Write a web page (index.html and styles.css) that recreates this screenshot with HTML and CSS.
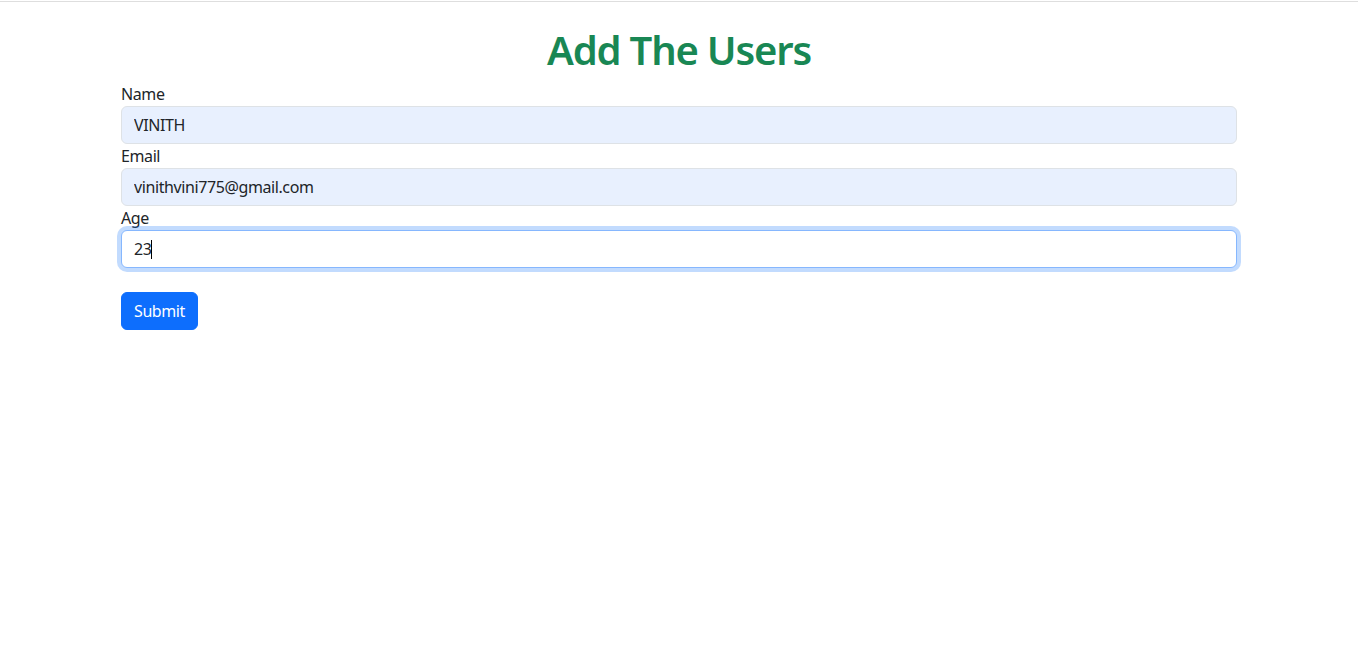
FILE: index.html
```html
<!DOCTYPE html>
<html lang="en">
<head>
<meta charset="utf-8">
<title>Add The Users</title>
<link rel="stylesheet" href="styles.css">
</head>
<body>
<div class="topline"></div>
<main class="container">
  <h1 class="title">Add The Users</h1>
  <form class="form">
    <div class="field">
      <label class="label" for="name">Name</label>
      <input class="control autofill" id="name" type="text" value="VINITH">
    </div>
    <div class="field">
      <label class="label" for="email">Email</label>
      <input class="control autofill" id="email" type="email" value="vinithvini775@gmail.com">
    </div>
    <div class="field">
      <label class="label" for="age">Age</label>
      <div class="control-wrap">
        <input class="control focused" id="age" type="text" value="23">
        <span class="caret"></span>
      </div>
    </div>
    <button class="btn" type="button">Submit</button>
  </form>
</main>
</body>
</html>
```
FILE: styles.css
```css
* { box-sizing: border-box; }
html, body { margin: 0; padding: 0; background: #fff; }
body {
  font-family: "Noto Sans", "Open Sans", sans-serif;
  font-size: 16px;
  line-height: 1.5;
  letter-spacing: -0.4px;
  color: #212529;
  padding-top: 1px;
  padding-right: 4px;
}
.topline { height: 1px; background: #dedede; }
.container {
  max-width: 1140px;
  margin: 0 auto;
  padding: 0 12px;
}
.title {
  margin: 24px 0 8px;
  font-size: 40px;
  line-height: 48px;
  font-weight: 600;
  letter-spacing: -1.2px;
  color: #198754;
  text-align: center;
}
.form { display: flex; flex-direction: column; align-items: flex-start; }
.field { width: 100%; display: flex; flex-direction: column; }
.label { display: block; line-height: 24px; }
.control {
  display: block;
  width: 100%;
  height: 38px;
  padding: 6px 12px;
  font: inherit;
  letter-spacing: inherit;
  color: #212529;
  background: #fff;
  border: 1px solid #dee2e6;
  border-radius: 6px;
  outline: none;
}
.autofill { background: #e8f0fe; }
.focused {
  border-color: #86b7fe;
  box-shadow: 0 0 0 4px rgba(13, 110, 253, 0.25);
}
.control-wrap { position: relative; }
.caret {
  position: absolute;
  left: 30px;
  top: 10px;
  width: 1px;
  height: 19px;
  background: #000;
}
.btn {
  margin-top: 24px;
  height: 38px;
  padding: 6px 12px;
  font: inherit;
  letter-spacing: inherit;
  color: #fff;
  background: #0d6efd;
  border: 1px solid #0d6efd;
  border-radius: 6px;
}
```
